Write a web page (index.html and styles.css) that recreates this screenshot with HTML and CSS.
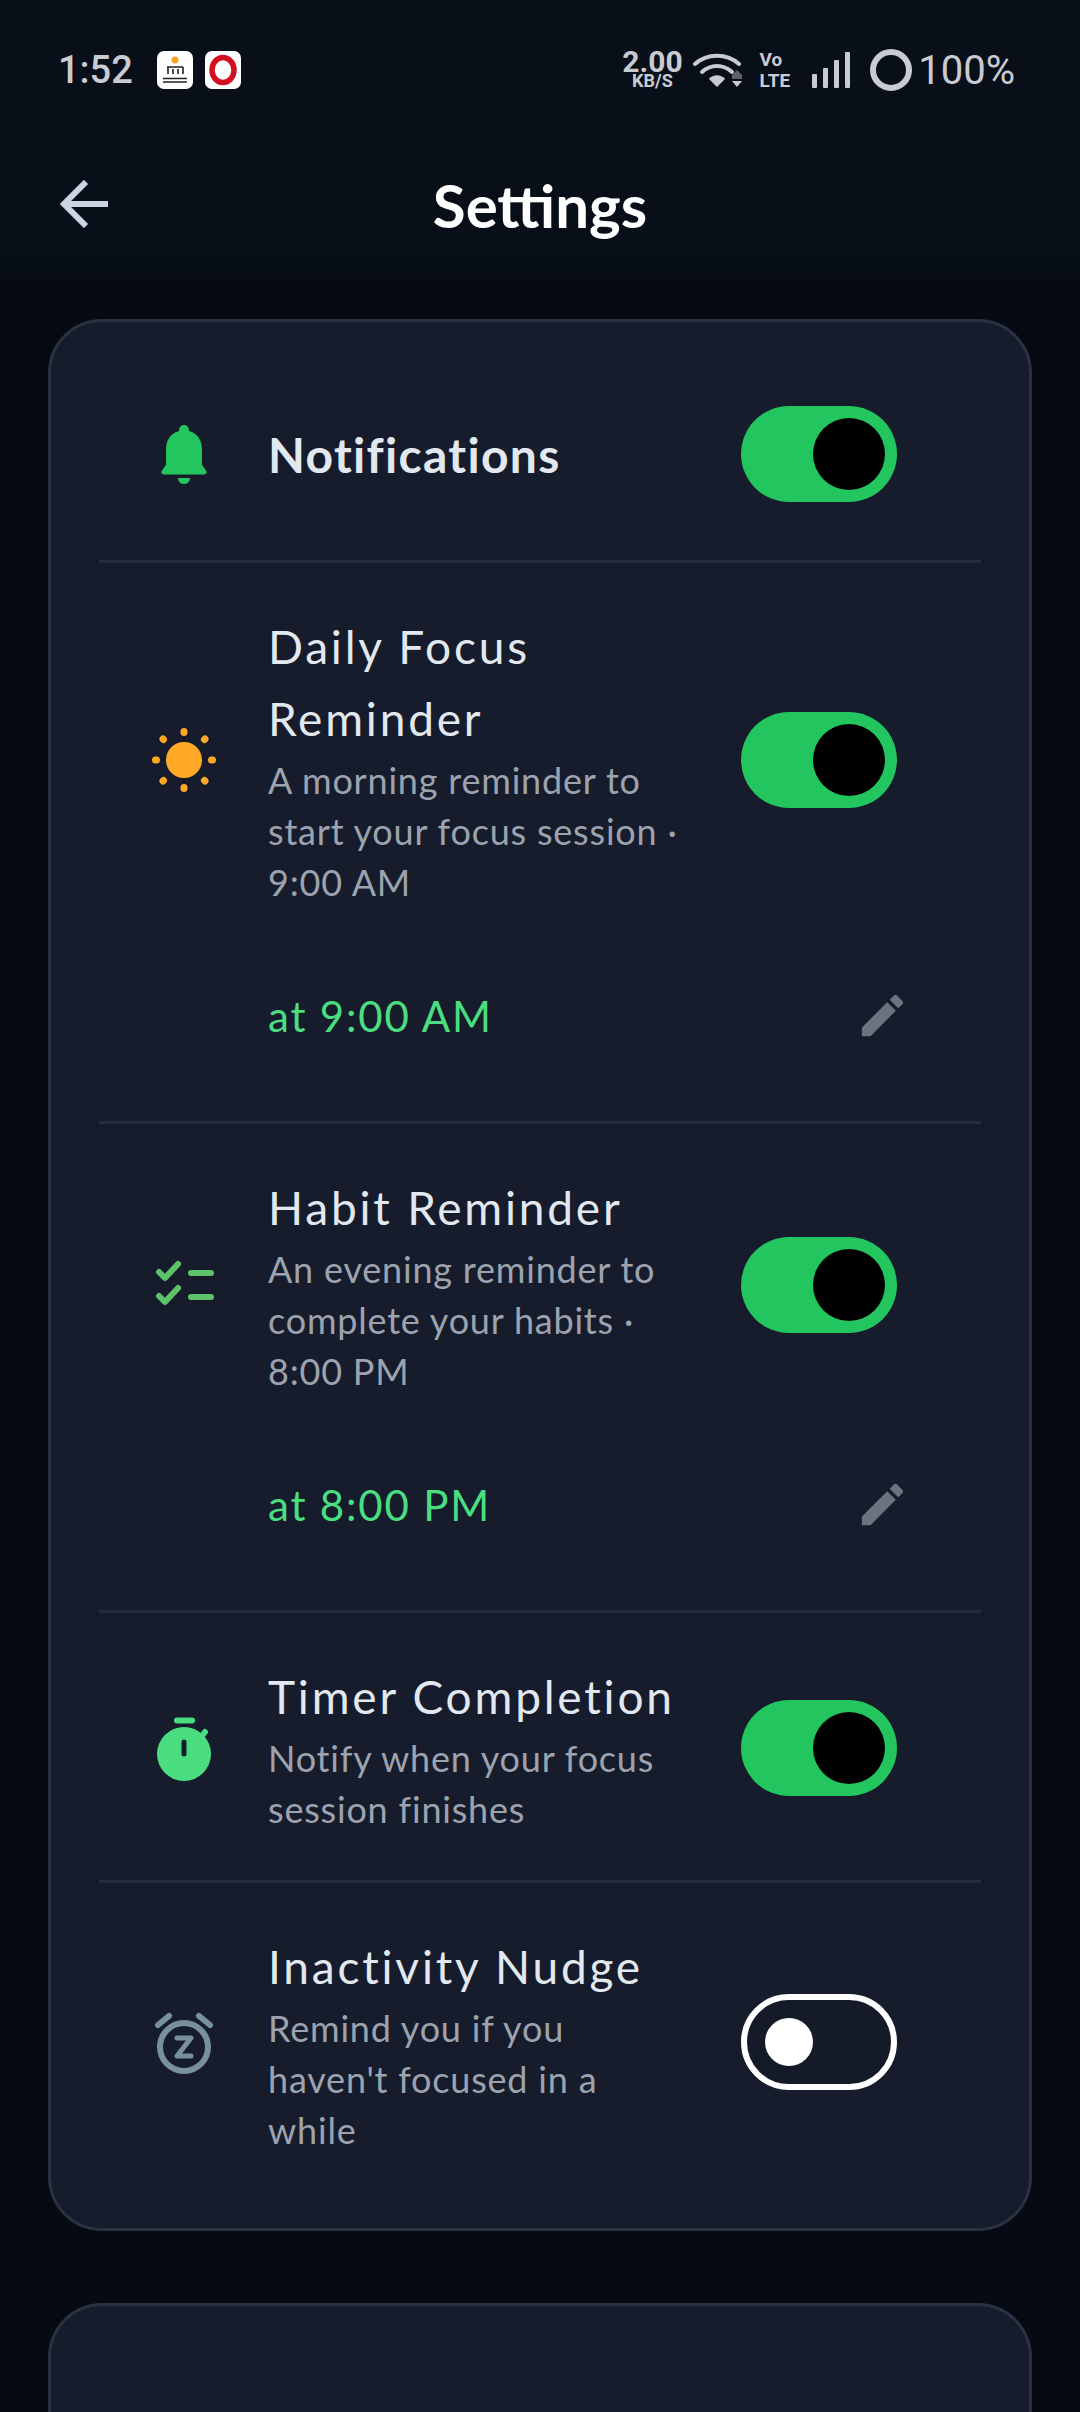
FILE: index.html
```html
<!DOCTYPE html>
<html lang="en">
<head>
    <meta charset="UTF-8">
    <meta name="viewport" content="width=device-width, initial-scale=1.0">
    <title>Settings</title>
    <link rel="stylesheet" href="styles.css">
</head>
<body>
    <div class="topbar">
        <div class="status">
            <div class="status-left">
                <span class="clock">1:52</span>
                <svg class="app-icon" viewBox="0 0 36 38">
                    <rect width="36" height="38" rx="7" fill="#fff"/>
                    <circle cx="18" cy="9" r="3.500" fill="#f7a326"/>
                    <path d="M10 16h16M11 16v7M16 18v5M21 18v5M26 16v7M6 27.500h24M6 31h24" stroke="#222" stroke-width="1.600" fill="none"/>
                </svg>
                <svg class="app-icon" viewBox="0 0 36 38">
                    <rect width="36" height="38" rx="7" fill="#fff"/>
                    <ellipse cx="18" cy="19" rx="11" ry="12.500" fill="none" stroke="#d3101f" stroke-width="5.500"/>
                </svg>
            </div>
            <div class="status-right">
                <div class="speed"><span class="speed-num">2.00</span><span class="speed-unit">KB/S</span></div>
                <svg class="wifi" viewBox="0 0 50 38" fill="none">
                    <path d="M2 13C14 2 34 2 46 13" stroke="#c8ccd2" stroke-width="4" stroke-linecap="round"/>
                    <path d="M9 21C18 13 30 13 39 21" stroke="#c8ccd2" stroke-width="4" stroke-linecap="round"/>
                    <path d="M24 36l-8-8c4-5 12-5 16 0z" fill="#c8ccd2"/>
                    <path d="M39 28v-4l5-5 5 5v4z" fill="#5c616a"/>
                    <path d="M39 30h10l-5 6z" fill="#c8ccd2"/>
                </svg>
                <div class="volte"><span>Vo</span><span>LTE</span></div>
                <svg class="signal" viewBox="0 0 38 36" fill="#c8ccd2">
                    <rect x="0" y="22" width="5" height="14" rx="1"/>
                    <rect x="11" y="16" width="5" height="20" rx="1"/>
                    <rect x="22" y="8" width="5" height="28" rx="1"/>
                    <rect x="33" y="0" width="5" height="36" rx="1"/>
                </svg>
                <span class="battery-ring"></span>
                <span class="battery-pct">100%</span>
            </div>
        </div>
        <div class="header">
            <svg class="back" viewBox="0 0 48 48" fill="none" stroke="#cbd5e1" stroke-width="6">
                <path d="M48 24H4M26 2L4 24l22 22"/>
            </svg>
            <h1>Settings</h1>
        </div>
    </div>

    <div class="content">
        <div class="card">
            <div class="row row-main">
                <div class="row-top">
                    <div class="icon-col">
                        <svg class="bell" viewBox="0 0 46 59" fill="#22c55e">
                            <path d="M23 0a5 5 0 0 1 5 5v1c8 2 13 9 13 18v16l4 5.500c1.500 2 .5 4-2 4H3c-2.500 0-3.500-2-2-4l4-5.500V24c0-9 5-16 13-18V5a5 5 0 0 1 5-5z"/>
                            <path d="M17 53h12c0 3.500-2.500 6-6 6s-6-2.500-6-6z"/>
                        </svg>
                    </div>
                    <div class="text-col"><div class="label-bold">Notifications</div></div>
                    <div class="toggle on"><span class="thumb"></span></div>
                </div>
            </div>

            <div class="row">
                <div class="row-top">
                    <div class="icon-col">
                        <svg class="row-icon" viewBox="0 0 66 66" fill="#ffa726">
                            <circle cx="33" cy="33" r="18"/>
                            <g stroke="#ffa726" stroke-width="7" stroke-linecap="round">
                                <path d="M33 4.500v1M33 60.500v1M4.500 33h1M60.500 33h1M12 12l.5.5M53.500 53.500l.5.5M12 54l.5-.5M53.500 12.500l.5-.5"/>
                            </g>
                        </svg>
                    </div>
                    <div class="text-col">
                        <div class="label">Daily Focus Reminder</div>
                        <div class="desc">A morning reminder to start your focus session · 9:00 AM</div>
                    </div>
                    <div class="toggle on"><span class="thumb"></span></div>
                </div>
                <div class="time-row">
                    <span class="time">at 9:00 AM</span>
                    <svg class="pencil" viewBox="0 0 24 24" fill="#6b7280">
                        <path d="M3 17.250V21h3.750L17.810 9.940l-3.750-3.750L3 17.250zM20.710 7.040c.39-.39.39-1.020 0-1.410l-2.340-2.340c-.39-.39-1.020-.39-1.410 0l-1.830 1.830 3.750 3.750 1.830-1.830z"/>
                    </svg>
                </div>
            </div>

            <div class="row">
                <div class="row-top">
                    <div class="icon-col">
                        <svg class="row-icon" viewBox="0 0 66 66" fill="none" stroke="#5ec26a" stroke-width="6" stroke-linecap="round" stroke-linejoin="round">
                            <path d="M8 20l6 6 13-14M8 44l6 6 13-14M40 21h20M40 45h20"/>
                        </svg>
                    </div>
                    <div class="text-col">
                        <div class="label">Habit Reminder</div>
                        <div class="desc">An evening reminder to complete your habits · 8:00 PM</div>
                    </div>
                    <div class="toggle on"><span class="thumb"></span></div>
                </div>
                <div class="time-row">
                    <span class="time">at 8:00 PM</span>
                    <svg class="pencil" viewBox="0 0 24 24" fill="#6b7280">
                        <path d="M3 17.250V21h3.750L17.810 9.940l-3.750-3.750L3 17.250zM20.710 7.040c.39-.39.39-1.020 0-1.410l-2.340-2.340c-.39-.39-1.020-.39-1.410 0l-1.830 1.830 3.750 3.750 1.830-1.830z"/>
                    </svg>
                </div>
            </div>

            <div class="row">
                <div class="row-top">
                    <div class="icon-col">
                        <svg class="row-icon" viewBox="0 0 66 66">
                            <circle cx="33" cy="39" r="27" fill="#4ade80"/>
                            <path d="M26 5.500h15M50 22l4-5" stroke="#4ade80" stroke-width="6" stroke-linecap="round"/>
                            <path d="M33 27v12" stroke="#161c2c" stroke-width="5" stroke-linecap="round"/>
                        </svg>
                    </div>
                    <div class="text-col">
                        <div class="label">Timer Completion</div>
                        <div class="desc">Notify when your focus session finishes</div>
                    </div>
                    <div class="toggle on"><span class="thumb"></span></div>
                </div>
            </div>

            <div class="row row-last">
                <div class="row-top">
                    <div class="icon-col">
                        <svg class="row-icon" viewBox="0 0 66 66" fill="none" stroke="#78909c" stroke-width="6" stroke-linecap="round" stroke-linejoin="round">
                            <circle cx="33" cy="36" r="24"/>
                            <path d="M7 14L18 5M59 14L48 5"/>
                            <path d="M26 27h14L26 45h14" stroke-width="5"/>
                        </svg>
                    </div>
                    <div class="text-col">
                        <div class="label">Inactivity Nudge</div>
                        <div class="desc">Remind you if you haven't focused in a while</div>
                    </div>
                    <div class="toggle off"><span class="thumb"></span></div>
                </div>
            </div>
        </div>

        <div class="card card-next"></div>
    </div>
</body>
</html>
```

FILE: styles.css
```css
html, body {
    margin: 0;
    height: 2412px;
    overflow: hidden;
}
body {
    font-family: "Lato", "Noto Sans", sans-serif;
    background-color: #050a13;
}
.topbar {
    height: 290px;
    background: linear-gradient(#080f18 85%, #050a13);
}
.status {
    display: flex;
    justify-content: space-between;
    align-items: center;
    height: 42px;
    padding: 49px 65px 0 58px;
    font-family: "Roboto", sans-serif;
    color: #c8ccd2;
}
.status-left, .status-right {
    display: flex;
    align-items: center;
}
.clock {
    font-size: 38px;
    font-weight: 500;
    margin-right: 24px;
}
.app-icon {
    width: 36px;
    height: 38px;
    margin-right: 12px;
}
.speed {
    display: flex;
    flex-direction: column;
    align-items: center;
    font-weight: 700;
    margin-right: 10px;
}
.speed-num {
    font-size: 30px;
    line-height: 22px;
}
.speed-unit {
    font-size: 18px;
    line-height: 16px;
}
.wifi {
    width: 50px;
    height: 38px;
    margin-right: 17px;
}
.volte {
    display: flex;
    flex-direction: column;
    font-size: 19px;
    font-weight: 700;
    line-height: 21px;
    margin-right: 22px;
}
.signal {
    width: 38px;
    height: 36px;
    margin-right: 20px;
}
.battery-ring {
    width: 30px;
    height: 30px;
    border: 6px solid #c8ccd2;
    border-radius: 50%;
    margin-right: 6px;
}
.battery-pct {
    font-size: 40px;
}
.header {
    display: flex;
    align-items: center;
    justify-content: center;
    position: relative;
    height: 100px;
    margin-top: 64px;
}
.back {
    position: absolute;
    left: 60px;
    top: 25px;
    width: 48px;
    height: 48px;
}
h1 {
    margin: 0;
    font-size: 60px;
    font-weight: 700;
    color: #fff;
}
.content {
    padding: 29px 48px 0;
}
.card {
    background-color: #161c2c;
    border: 3px solid #2a3140;
    border-radius: 54px;
    padding: 24px 48px;
}
.card-next {
    margin-top: 72px;
    height: 107px;
    padding: 0;
    border-bottom: none;
    border-radius: 54px 54px 0 0;
}
.row {
    padding: 48px 0 45px;
    border-bottom: 3px solid #262c3b;
}
.row-main {
    padding: 60px 0 58px;
}
.row-last {
    border-bottom: none;
    padding-bottom: 48px;
}
.row-top {
    display: flex;
    align-items: center;
}
.icon-col {
    width: 169px;
    flex-shrink: 0;
    display: flex;
    justify-content: center;
}
.bell {
    width: 46px;
    height: 59px;
}
.row-icon {
    width: 66px;
    height: 66px;
}
.text-col {
    width: 415px;
    margin-right: 58px;
}
.label-bold {
    font-size: 48px;
    font-weight: 700;
    letter-spacing: 1.3px;
    color: #e2e8f0;
}
.label {
    font-size: 46px;
    line-height: 72px;
    letter-spacing: 2.8px;
    color: #e2e8f0;
}
.desc {
    font-size: 36px;
    line-height: 51px;
    letter-spacing: 0.8px;
    color: #9ca3af;
}
.toggle {
    width: 156px;
    height: 96px;
    box-sizing: border-box;
    border-radius: 48px;
    display: flex;
    align-items: center;
}
.toggle.on {
    background-color: #22c55e;
    justify-content: flex-end;
    padding-right: 12px;
}
.toggle.on .thumb {
    width: 72px;
    height: 72px;
    border-radius: 50%;
    background: #000;
}
.toggle.off {
    background-color: #141a28;
    border: 6px solid #fff;
    padding-left: 18px;
    margin-top: -3px;
}
.toggle.off .thumb {
    width: 48px;
    height: 48px;
    border-radius: 50%;
    background: #fff;
}
.time-row {
    display: flex;
    justify-content: space-between;
    align-items: center;
    height: 60px;
    margin: 78px 71px 30px 169px;
}
.time {
    font-size: 42px;
    letter-spacing: 1.8px;
    color: #4ade80;
}
.pencil {
    width: 55px;
    height: 55px;
    margin-top: -2px;
}
```
